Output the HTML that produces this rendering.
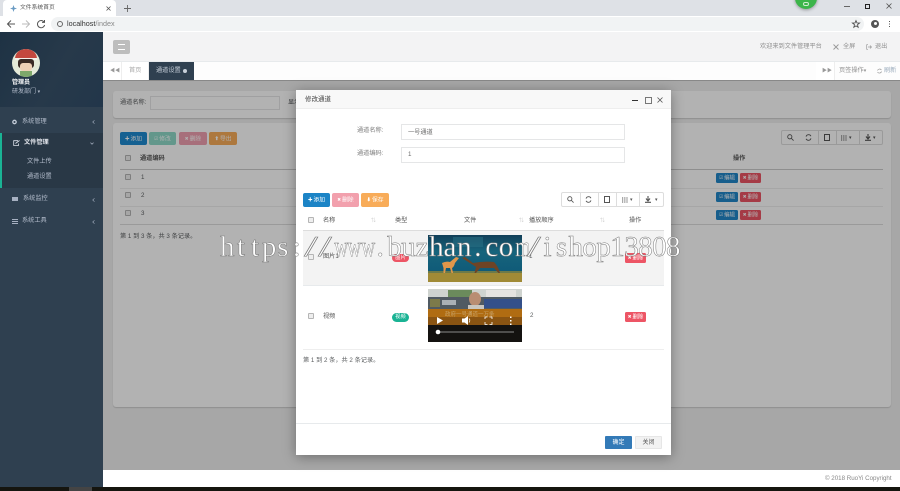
<!DOCTYPE html>
<html lang="zh"><head><meta charset="utf-8"><title>文件系统首页</title>
<style>
*{box-sizing:border-box}
html,body{margin:0;padding:0;width:900px;height:491px;overflow:hidden;background:#fff;font-family:"Liberation Sans","Noto Sans CJK SC",sans-serif}
#r{position:absolute;left:0;top:0;width:900px;height:491px;overflow:hidden;filter:blur(.25px)}
.a,.t{position:absolute}
.t{font-size:6.2px;line-height:10px;white-space:nowrap;color:#5c5f61}
.b{position:absolute;border-radius:2px;color:#fff;font-size:5.8px;line-height:14px;text-align:center;white-space:nowrap}
.b i{font-style:normal;font-size:4.5px;margin-right:1px;vertical-align:.3px}
.m{height:10px;line-height:10px;font-size:5.4px;border-radius:1.5px}
svg{position:absolute;overflow:visible}
.side{color:#b4bdcc}
.cb{position:absolute;width:6px;height:6px;border:1px solid #b5b5b5;background:#eee;border-radius:1px}
#w{position:absolute;left:220px;top:232px;height:30px;line-height:30px;white-space:nowrap;font-family:"Liberation Serif",serif;font-size:29px;color:#fff;-webkit-text-stroke:.5px #7a7a7a}
#w span{display:inline-block;width:13.94px;text-align:center}
#w .n{transform:scaleX(.66)}
#w .s{transform:scaleX(1.7)}
</style></head><body><div id="r">
<!-- browser chrome -->
<div class="a" style="left:0;top:0;width:900px;height:16px;background:#dee1e6"></div>
<div class="a" style="left:3px;top:0;width:113px;height:16px;background:#fff;border-radius:4px 4px 0 0"></div>
<svg style="left:10px;top:5px" width="7" height="7" viewBox="0 0 8 8"><path d="M4 0L5 3L8 4L5 5L4 8L3 5L0 4L3 3Z" fill="#6a9bc3"/></svg>
<div class="t" style="left:20px;top:3px;color:#555;font-size:5.8px">文件系统首页</div>
<svg style="left:106px;top:6px" width="5" height="5" viewBox="0 0 5 5"><path d="M.5 .5L4.5 4.5M4.5 .5L.5 4.5" stroke="#555" stroke-width=".8"/></svg>
<svg style="left:124px;top:5px" width="7" height="7" viewBox="0 0 7 7"><path d="M3.5 0V7M0 3.5H7" stroke="#666" stroke-width=".9"/></svg>
<div class="a" style="left:795px;top:-13px;width:22px;height:22px;border-radius:50%;background:#3cb54a;box-shadow:0 1px 3px rgba(0,0,0,.35)"></div>
<div class="a" style="left:803px;top:2px;width:6px;height:4px;border:1px solid #cfeccf;border-radius:2px"></div>
<div class="a" style="left:844px;top:6px;width:6px;height:1px;background:#666"></div>
<div class="a" style="left:865px;top:4px;width:5px;height:5px;border:1.3px solid #222"></div>
<svg style="left:886px;top:3px" width="6" height="6" viewBox="0 0 6 6"><path d="M.5 .5L5.5 5.5M5.5 .5L.5 5.5" stroke="#555" stroke-width=".8"/></svg>
<div class="a" style="left:0;top:16px;width:900px;height:16px;background:#fff"></div>
<svg style="left:6px;top:19px" width="10" height="10" viewBox="0 0 10 10"><path d="M9 5H1.5M5 1.5L1.5 5L5 8.5" fill="none" stroke="#555" stroke-width="1"/></svg>
<svg style="left:21px;top:19px" width="10" height="10" viewBox="0 0 10 10"><path d="M1 5H8.5M5 1.5L8.5 5L5 8.5" fill="none" stroke="#bbb" stroke-width="1"/></svg>
<svg style="left:36px;top:19px" width="10" height="10" viewBox="0 0 10 10"><path d="M8 3A3.6 3.6 0 1 0 8.6 6M8.5 1V3.4H6" fill="none" stroke="#555" stroke-width="1"/></svg>
<div class="a" style="left:51px;top:17px;width:813px;height:14px;border-radius:7px;background:#f1f3f4"></div>
<div class="a" style="left:57px;top:21px;width:6px;height:6px;border:1px solid #666;border-radius:50%"></div>
<div class="t" style="left:67px;top:19px;color:#333;font-size:7.2px">localhost<span style="color:#888">/index</span></div>
<svg style="left:852px;top:20px" width="8" height="8" viewBox="0 0 8 8"><path d="M4 .6L5 3H7.6L5.5 4.7L6.2 7.3L4 5.8L1.8 7.3L2.5 4.7L.4 3H3Z" fill="none" stroke="#444" stroke-width=".8"/></svg>
<div class="a" style="left:871px;top:20px;width:8px;height:8px;border-radius:50%;background:#555"></div>
<div class="a" style="left:873.5px;top:21.5px;width:3px;height:3px;border-radius:50%;background:#fff"></div>
<div class="a" style="left:889px;top:21px;width:1.2px;height:1.2px;background:#555;box-shadow:0 2.5px #555,0 5px #555"></div>

<!-- sidebar -->
<div class="a" style="left:0;top:32px;width:103px;height:455px;background:#2f4050"></div>
<div class="a" style="left:0;top:32px;width:103px;height:75px;background:linear-gradient(120deg,#1e3244,#27394a 55%,#22364a)"></div>
<div class="a" style="left:12px;top:49px;width:28px;height:28px;border-radius:50%;background:#e4ead8;overflow:hidden">
 <div class="a" style="left:3px;top:0;width:22px;height:10px;background:#c4483e;border-radius:10px 10px 0 0"></div>
 <div class="a" style="left:3px;top:9px;width:22px;height:2px;background:#f5f0ea"></div>
 <div class="a" style="left:6px;top:10px;width:16px;height:9px;background:#3a2b25;border-radius:3px"></div>
 <div class="a" style="left:8px;top:14px;width:12px;height:8px;background:#eed1b6;border-radius:3px"></div>
 <div class="a" style="left:8px;top:22px;width:12px;height:6px;background:#7ea86b"></div>
</div>
<div class="t" style="left:12px;top:78px;color:#fff;font-weight:bold;font-size:6px">管理员</div>
<div class="t side" style="left:12px;top:87px;font-size:6px">研发部门 <span style="font-size:5px">▾</span></div>
<svg style="left:12px;top:119px" width="5" height="6" viewBox="0 0 5 6"><circle cx="2.5" cy="3" r="1.7" fill="none" stroke="#c3ccd8" stroke-width="1.3"/></svg>
<div class="t side" style="left:22px;top:117px">系统管理</div>
<svg style="left:92px;top:120px" width="3" height="4" viewBox="0 0 3 4"><path d="M2.5 .3L.7 2L2.5 3.7" fill="none" stroke="#a7b1c2" stroke-width=".6"/></svg>
<div class="a" style="left:0;top:133px;width:103px;height:55px;background:#293846;border-left:2px solid #1ab394"></div>
<svg style="left:13px;top:140px" width="7" height="6" viewBox="0 0 7 6"><path d="M5 .7H.7V5.5H5.5V3.5M2.5 3.5L6.5 .5" fill="none" stroke="#dfe4ed" stroke-width=".8"/></svg>
<div class="t" style="left:24px;top:138px;color:#e6e9ef;font-weight:bold">文件管理</div>
<svg style="left:90px;top:142px" width="4" height="3" viewBox="0 0 5 4"><path d="M.5 .8L2.5 3L4.5 .8" fill="none" stroke="#a7b1c2"/></svg>
<div class="t side" style="left:27px;top:157px">文件上传</div>
<div class="t side" style="left:27px;top:172px">通道设置</div>
<div class="a" style="left:12px;top:197px;width:6px;height:4px;background:#a7b1c2"></div>
<div class="t side" style="left:23px;top:194px">系统监控</div>
<svg style="left:92px;top:198px" width="3" height="4" viewBox="0 0 3 4"><path d="M2.5 .3L.7 2L2.5 3.7" fill="none" stroke="#a7b1c2" stroke-width=".6"/></svg>
<div class="a" style="left:12px;top:219px;width:6px;height:5px;border-top:1px solid #a7b1c2;border-bottom:1px solid #a7b1c2"></div>
<div class="a" style="left:12px;top:221px;width:6px;height:1px;background:#a7b1c2"></div>
<div class="t side" style="left:22px;top:216px">系统工具</div>
<svg style="left:92px;top:220px" width="3" height="4" viewBox="0 0 3 4"><path d="M2.5 .3L.7 2L2.5 3.7" fill="none" stroke="#a7b1c2" stroke-width=".6"/></svg>

<!-- topbar -->
<div class="a" style="left:103px;top:32px;width:797px;height:30px;background:#f3f3f4;border-bottom:1px solid #e7eaec"></div>
<div class="a" style="left:113px;top:40px;width:17px;height:14px;background:#bdbdbd;border-radius:2px"></div>
<div class="a" style="left:118px;top:44px;width:7px;height:6px;border-top:1px solid #fff;border-bottom:1px solid #fff"></div>
<div class="t" style="left:760px;top:42px;color:#8f8f8f">欢迎来到文件管理平台</div>
<svg style="left:833px;top:44px" width="6" height="6" viewBox="0 0 6 6"><path d="M.5 .5L5.5 5.5M5.5 .5L.5 5.5" stroke="#999" stroke-width=".9"/></svg>
<div class="t" style="left:843px;top:42px;color:#8f8f8f">全屏</div>
<svg style="left:866px;top:44px" width="6" height="6" viewBox="0 0 6 6"><path d="M2 .7H.7V5.3H2M2 3H5.5M4 1.5L5.5 3L4 4.5" fill="none" stroke="#999" stroke-width=".7"/></svg>
<div class="t" style="left:875px;top:42px;color:#8f8f8f">退出</div>
<div class="a" style="left:103px;top:62px;width:797px;height:19px;background:#fdfdfd"></div>
<div class="a" style="left:103px;top:62px;width:19px;height:18px;background:#fff;border-right:1px solid #eee"></div>
<div class="t" style="left:110px;top:66px;color:#999;font-size:5px">◀◀</div>
<div class="a" style="left:122px;top:62px;width:27px;height:18px;background:#fff;border-right:1px solid #eee"></div>
<div class="t" style="left:129px;top:66px;color:#aaa">首页</div>
<div class="a" style="left:149px;top:62px;width:45px;height:19px;background:#2f4050"></div>
<div class="t" style="left:156px;top:66px;color:#c8d0da">通道设置</div>
<div class="a" style="left:183px;top:69px;width:4px;height:4px;background:#c8d0da;border-radius:50%"></div>
<div class="a" style="left:816px;top:62px;width:19px;height:18px;background:#fff;border-right:1px solid #eee"></div>
<div class="t" style="left:822px;top:66px;color:#999;font-size:5px">▶▶</div>
<div class="t" style="left:839px;top:66px;color:#8f8f8f">页签操作<span style="font-size:5px">▾</span></div>
<svg style="left:877px;top:68px" width="5" height="6" viewBox="0 0 5 6"><path d="M4.4 2A2.2 2.2 0 0 0 .5 2.5M.5 4A2.2 2.2 0 0 0 4.5 3.5" fill="none" stroke="#999" stroke-width=".7"/></svg>
<div class="t" style="left:884px;top:66px;color:#9ab">刷新</div>
<div class="a" style="left:103px;top:80px;width:797px;height:1px;background:#888"></div>

<!-- background content -->
<div class="a" style="left:103px;top:81px;width:797px;height:389px;background:#f0f0f0"></div>
<div class="a" style="left:113px;top:91px;width:778px;height:27px;background:#fff;border-radius:3px;box-shadow:0 1px 1px rgba(0,0,0,.15)"></div>
<div class="t" style="left:120px;top:98px">通道名称:</div>
<div class="a" style="left:150px;top:96px;width:130px;height:14px;background:#fff;border:1px solid #e5e6e7"></div>
<div class="t" style="left:288px;top:98px">显示</div>
<div class="a" style="left:113px;top:123px;width:778px;height:284px;background:#fff;border-radius:3px;box-shadow:0 1px 1px rgba(0,0,0,.15)"></div>
<div class="b" style="left:120px;top:132px;width:27px;height:13px;line-height:13px;background:#1f8ad0"><i>✚</i>添加</div>
<div class="b" style="left:149px;top:132px;width:27px;height:13px;line-height:13px;background:#8fd9c8"><i>☑</i>修改</div>
<div class="b" style="left:179px;top:132px;width:28px;height:13px;line-height:13px;background:#f0a0b0"><i>✖</i>删除</div>
<div class="b" style="left:209px;top:132px;width:28px;height:13px;line-height:13px;background:#f8ac59"><i>⬆</i>导出</div>
<div class="a" style="left:781px;top:130px;width:102px;height:15px;background:#fff;border:1px solid #ddd;border-radius:2px"></div>
<div class="a" style="left:818px;top:130px;width:1px;height:15px;background:#ddd"></div>
<div class="a" style="left:836px;top:130px;width:1px;height:15px;background:#ddd"></div>
<div class="a" style="left:859px;top:130px;width:1px;height:15px;background:#ddd"></div>
<svg style="left:787px;top:134px" width="7" height="7" viewBox="0 0 8 8"><circle cx="3.2" cy="3.2" r="2.4" fill="none" stroke="#555"/><path d="M5 5L7.5 7.5" stroke="#555"/></svg>
<svg style="left:805px;top:134px" width="7" height="7" viewBox="0 0 8 8"><path d="M6.8 2.5A3 3 0 0 0 1.2 3M1.2 5.5A3 3 0 0 0 6.8 5" fill="none" stroke="#555"/></svg>
<div class="a" style="left:824px;top:134px;width:6px;height:7px;border:1px solid #555"></div>
<svg style="left:841px;top:135px" width="6" height="6" viewBox="0 0 6 6"><path d="M0 1H6M0 3H6M0 5H6" stroke="#555" stroke-dasharray="1.2 1"/></svg>
<div class="t" style="left:849px;top:133px;color:#555;font-size:5px">▾</div>
<svg style="left:865px;top:134px" width="6" height="7" viewBox="0 0 6 7"><path d="M3 0V4M1 2.5L3 5L5 2.5M0 6.3H6" fill="none" stroke="#555" stroke-width="1.1"/></svg>
<div class="t" style="left:873px;top:133px;color:#555;font-size:5px">▾</div>
<div class="cb" style="left:125px;top:155px"></div>
<div class="t" style="left:140px;top:154px;color:#555;font-weight:bold">通道编码</div>
<div class="t" style="left:733px;top:154px;color:#555;font-weight:bold">操作</div>
<div class="a" style="left:120px;top:169px;width:763px;height:1px;background:#ccc"></div>
<div class="a" style="left:120px;top:188px;width:763px;height:1px;background:#eee"></div>
<div class="a" style="left:120px;top:206px;width:763px;height:1px;background:#eee"></div>
<div class="a" style="left:120px;top:224px;width:763px;height:1px;background:#ddd"></div>
<div class="cb" style="left:125px;top:174px"></div>
<div class="cb" style="left:125px;top:192px"></div>
<div class="cb" style="left:125px;top:210px"></div>
<div class="t" style="left:141px;top:173px">1</div>
<div class="t" style="left:141px;top:191px">2</div>
<div class="t" style="left:141px;top:209px">3</div>
<div class="b m" style="left:716px;top:173px;width:22px;background:#2287c9"><i>☑</i>编辑</div>
<div class="b m" style="left:740px;top:173px;width:21px;background:#ed5565"><i>✖</i>删除</div>
<div class="b m" style="left:716px;top:192px;width:22px;background:#2287c9"><i>☑</i>编辑</div>
<div class="b m" style="left:740px;top:192px;width:21px;background:#ed5565"><i>✖</i>删除</div>
<div class="b m" style="left:716px;top:210px;width:22px;background:#2287c9"><i>☑</i>编辑</div>
<div class="b m" style="left:740px;top:210px;width:21px;background:#ed5565"><i>✖</i>删除</div>
<div class="t" style="left:120px;top:232px">第 1 到 3 条，共 3 条记录。</div>
<!-- overlay -->
<div class="a" style="left:103px;top:81px;width:797px;height:389px;background:rgba(0,0,0,.3)"></div>

<!-- footer -->
<div class="a" style="left:103px;top:470px;width:797px;height:17px;background:#fff"></div>
<div class="t" style="left:825px;top:474px;color:#888">© 2018 RuoYi Copyright</div>
<div class="a" style="left:0;top:487px;width:900px;height:4px;background:#15150f"></div>
<div class="a" style="left:69px;top:487px;width:23px;height:4px;background:#444"></div>

<!-- modal -->
<div class="a" style="left:296px;top:90px;width:375px;height:365px;background:#fff;box-shadow:0 2px 12px rgba(0,0,0,.35)"></div>
<div class="a" style="left:296px;top:90px;width:375px;height:19px;background:#f8f8f8;border-bottom:1px solid #eee"></div>
<div class="t" style="left:305px;top:95px;color:#444;font-size:6.5px">修改通道</div>
<div class="a" style="left:632px;top:100px;width:6px;height:1px;background:#333"></div>
<div class="a" style="left:645px;top:97px;width:7px;height:7px;border:1px solid #777"></div>
<svg style="left:657px;top:97px" width="6" height="6" viewBox="0 0 6 6"><path d="M.5 .5L5.5 5.5M5.5 .5L.5 5.5" stroke="#555" stroke-width=".8"/></svg>
<div class="t" style="left:357px;top:126px;color:#808080">通道名称:</div>
<div class="a" style="left:401px;top:124px;width:224px;height:16px;border:1px solid #e5e6e7"></div>
<div class="t" style="left:408px;top:128px;color:#6a6a6a">一号通道</div>
<div class="t" style="left:357px;top:149px;color:#808080">通道编码:</div>
<div class="a" style="left:401px;top:147px;width:224px;height:16px;border:1px solid #e5e6e7"></div>
<div class="t" style="left:408px;top:150px;color:#6a6a6a">1</div>
<div class="b" style="left:303px;top:193px;width:27px;height:14px;background:#1c84c6"><i>✚</i>添加</div>
<div class="b" style="left:332px;top:193px;width:27px;height:14px;background:#f2a0ad"><i>✖</i>删除</div>
<div class="b" style="left:361px;top:193px;width:28px;height:14px;background:#f8ac59"><i>⬇</i>保存</div>
<div class="a" style="left:561px;top:192px;width:103px;height:15px;background:#fff;border:1px solid #ddd;border-radius:2px"></div>
<div class="a" style="left:580px;top:192px;width:1px;height:15px;background:#ddd"></div>
<div class="a" style="left:598px;top:192px;width:1px;height:15px;background:#ddd"></div>
<div class="a" style="left:616px;top:192px;width:1px;height:15px;background:#ddd"></div>
<div class="a" style="left:639px;top:192px;width:1px;height:15px;background:#ddd"></div>
<svg style="left:567px;top:196px" width="7" height="7" viewBox="0 0 8 8"><circle cx="3.2" cy="3.2" r="2.4" fill="none" stroke="#555"/><path d="M5 5L7.5 7.5" stroke="#555"/></svg>
<svg style="left:585px;top:196px" width="7" height="7" viewBox="0 0 8 8"><path d="M6.8 2.5A3 3 0 0 0 1.2 3M1.2 5.5A3 3 0 0 0 6.8 5" fill="none" stroke="#555"/></svg>
<div class="a" style="left:604px;top:196px;width:6px;height:7px;border:1px solid #555"></div>
<svg style="left:622px;top:197px" width="6" height="6" viewBox="0 0 6 6"><path d="M0 1H6M0 3H6M0 5H6" stroke="#555" stroke-dasharray="1.2 1"/></svg>
<div class="t" style="left:630px;top:195px;color:#555;font-size:5px">▾</div>
<svg style="left:645px;top:196px" width="6" height="7" viewBox="0 0 6 7"><path d="M3 0V4M1 2.5L3 5L5 2.5M0 6.3H6" fill="none" stroke="#555" stroke-width="1.1"/></svg>
<div class="t" style="left:655px;top:195px;color:#555;font-size:5px">▾</div>
<div class="cb" style="left:308px;top:217px"></div>
<div class="t" style="left:323px;top:216px;color:#555">名称</div>
<div class="t" style="left:395px;top:216px;color:#555">类型</div>
<div class="t" style="left:464px;top:216px;color:#555">文件</div>
<div class="t" style="left:529px;top:216px;color:#555">播放顺序</div>
<div class="t" style="left:629px;top:216px;color:#555">操作</div>
<div class="t" style="left:371px;top:216px;font-size:5px;color:#ccc">⇅</div>
<div class="t" style="left:519px;top:216px;font-size:5px;color:#ccc">⇅</div>
<div class="t" style="left:600px;top:216px;font-size:5px;color:#ccc">⇅</div>
<div class="a" style="left:303px;top:230px;width:361px;height:1px;background:#ddd"></div>
<div class="a" style="left:303px;top:231px;width:361px;height:54px;background:#f3f3f3"></div>
<div class="a" style="left:303px;top:285px;width:361px;height:1px;background:#e7eaec"></div>
<div class="a" style="left:303px;top:349px;width:361px;height:1px;background:#eee"></div>
<div class="cb" style="left:308px;top:254px"></div>
<div class="t" style="left:323px;top:252px;color:#555">图片1</div>
<div class="b" style="left:392px;top:254px;width:17px;height:8px;line-height:8px;font-size:5.2px;background:#ed5565;border-radius:4px">图片</div>
<svg style="left:428px;top:235px" width="94" height="47" viewBox="0 0 94 47">
<defs><linearGradient id="s" x1="0" y1="0" x2="0" y2="1"><stop offset="0" stop-color="#123f58"/><stop offset=".35" stop-color="#17647c"/><stop offset=".8" stop-color="#0f5a78"/></linearGradient></defs>
<rect width="94" height="47" fill="url(#s)"/>
<rect x="25" y="2" width="30" height="10" fill="#2c7488" opacity=".5"/>
<rect y="37" width="94" height="10" fill="#a08a36"/><rect y="36" width="94" height="2" fill="#6c7a4a"/>
<path d="M14 28Q18 26 22 27L28 22L31 23L27 28Q26 32 24 33L25 38H23.5L22 33L18 33L17 38H15.5L15.5 33Z" fill="#e0964a"/>
<path d="M34 23L37 22L45 28Q56 26 66 27Q70 31 72 38H70.5L66 33L52 33L48 38H46.5L48 32Z" fill="#6e4426"/>
</svg>
<div class="t" style="left:529px;top:252px">1</div>
<div class="b m" style="left:625px;top:253px;width:21px;background:#ed5565"><i>✖</i>删除</div>
<div class="cb" style="left:308px;top:313px"></div>
<div class="t" style="left:323px;top:312px;color:#555">视频</div>
<div class="b" style="left:392px;top:313px;width:17px;height:9px;line-height:9px;font-size:5.2px;background:#1ab394;border-radius:4.5px">视频</div>
<svg style="left:428px;top:289px" width="94" height="53" viewBox="0 0 94 53">
<rect width="94" height="53" fill="#1c1c1c"/>
<rect width="94" height="8" fill="#cfd3cf"/><rect x="20" y="1" width="24" height="9" fill="#6b8b5c"/><rect x="58" y="1" width="30" height="7" fill="#e5e3e0"/>
<rect y="8" width="94" height="12" fill="#505a62"/><rect x="56" y="10" width="38" height="9" fill="#34508a"/><rect x="2" y="10" width="10" height="8" fill="#7c7a4a"/><rect x="14" y="11" width="14" height="5" fill="#aab0b5"/>
<ellipse cx="47" cy="10" rx="6" ry="7" fill="#b98d72"/><rect x="40" y="16" width="16" height="4" fill="#c9c6c0"/>
<rect y="20" width="94" height="8" fill="#b06c12"/><rect y="28" width="94" height="8" fill="#8a5412"/><rect y="36" width="94" height="17" fill="#141210"/>
<text x="17" y="27" font-size="5.5" fill="#c9a46a" font-family="'Liberation Sans','Noto Sans CJK SC',sans-serif">政府一号通道一万条</text>
<path d="M9 28V35L15 31.5Z" fill="#fff"/><path d="M34 29.5H36.5L40 27V36L36.5 33.5H34Z" fill="#fff"/><path d="M41 29.5A3 3 0 0 1 41 33.5" fill="none" stroke="#fff" stroke-width=".8"/>
<path d="M57 30V28H59.5M61.5 28H64V30M64 33V35.5H61.5M59.5 35.5H57V33" fill="none" stroke="#fff" stroke-width=".8"/>
<rect x="82" y="27.5" width="1.5" height="1.5" fill="#fff"/><rect x="82" y="31" width="1.5" height="1.5" fill="#fff"/><rect x="82" y="34.5" width="1.5" height="1.5" fill="#fff"/>
<rect x="10" y="42.5" width="76" height="1" fill="#8a8a8a"/><circle cx="10" cy="43" r="2.3" fill="#fff"/>
</svg>
<div class="t" style="left:530px;top:311px">2</div>
<div class="b m" style="left:625px;top:312px;width:21px;background:#ed5565"><i>✖</i>删除</div>
<div class="t" style="left:303px;top:356px">第 1 到 2 条，共 2 条记录。</div>
<div class="a" style="left:296px;top:423px;width:375px;height:1px;background:#e7eaec"></div>
<div class="b" style="left:605px;top:436px;width:27px;height:13px;line-height:14px;background:#337ab7;border-radius:1px;font-size:6px">确定</div>
<div class="b" style="left:635px;top:436px;width:27px;height:13px;line-height:12px;background:#f2f2f2;color:#555;border:1px solid #e6e6e6;border-radius:1px;font-size:6px">关闭</div>

<!-- watermark -->
<div id="w"><span>h</span><span>t</span><span>t</span><span>p</span><span>s</span><span>:</span><span class="s">/</span><span class="s">/</span><span class="n">w</span><span class="n">w</span><span class="n">w</span><span>.</span><span>b</span><span>u</span><span>z</span><span>h</span><span>a</span><span>n</span><span>.</span><span>c</span><span>o</span><span class="n">m</span><span class="s">/</span><span>i</span><span>s</span><span>h</span><span>o</span><span>p</span><span>1</span><span>3</span><span>8</span><span>0</span><span>8</span></div>
</div></body></html>
